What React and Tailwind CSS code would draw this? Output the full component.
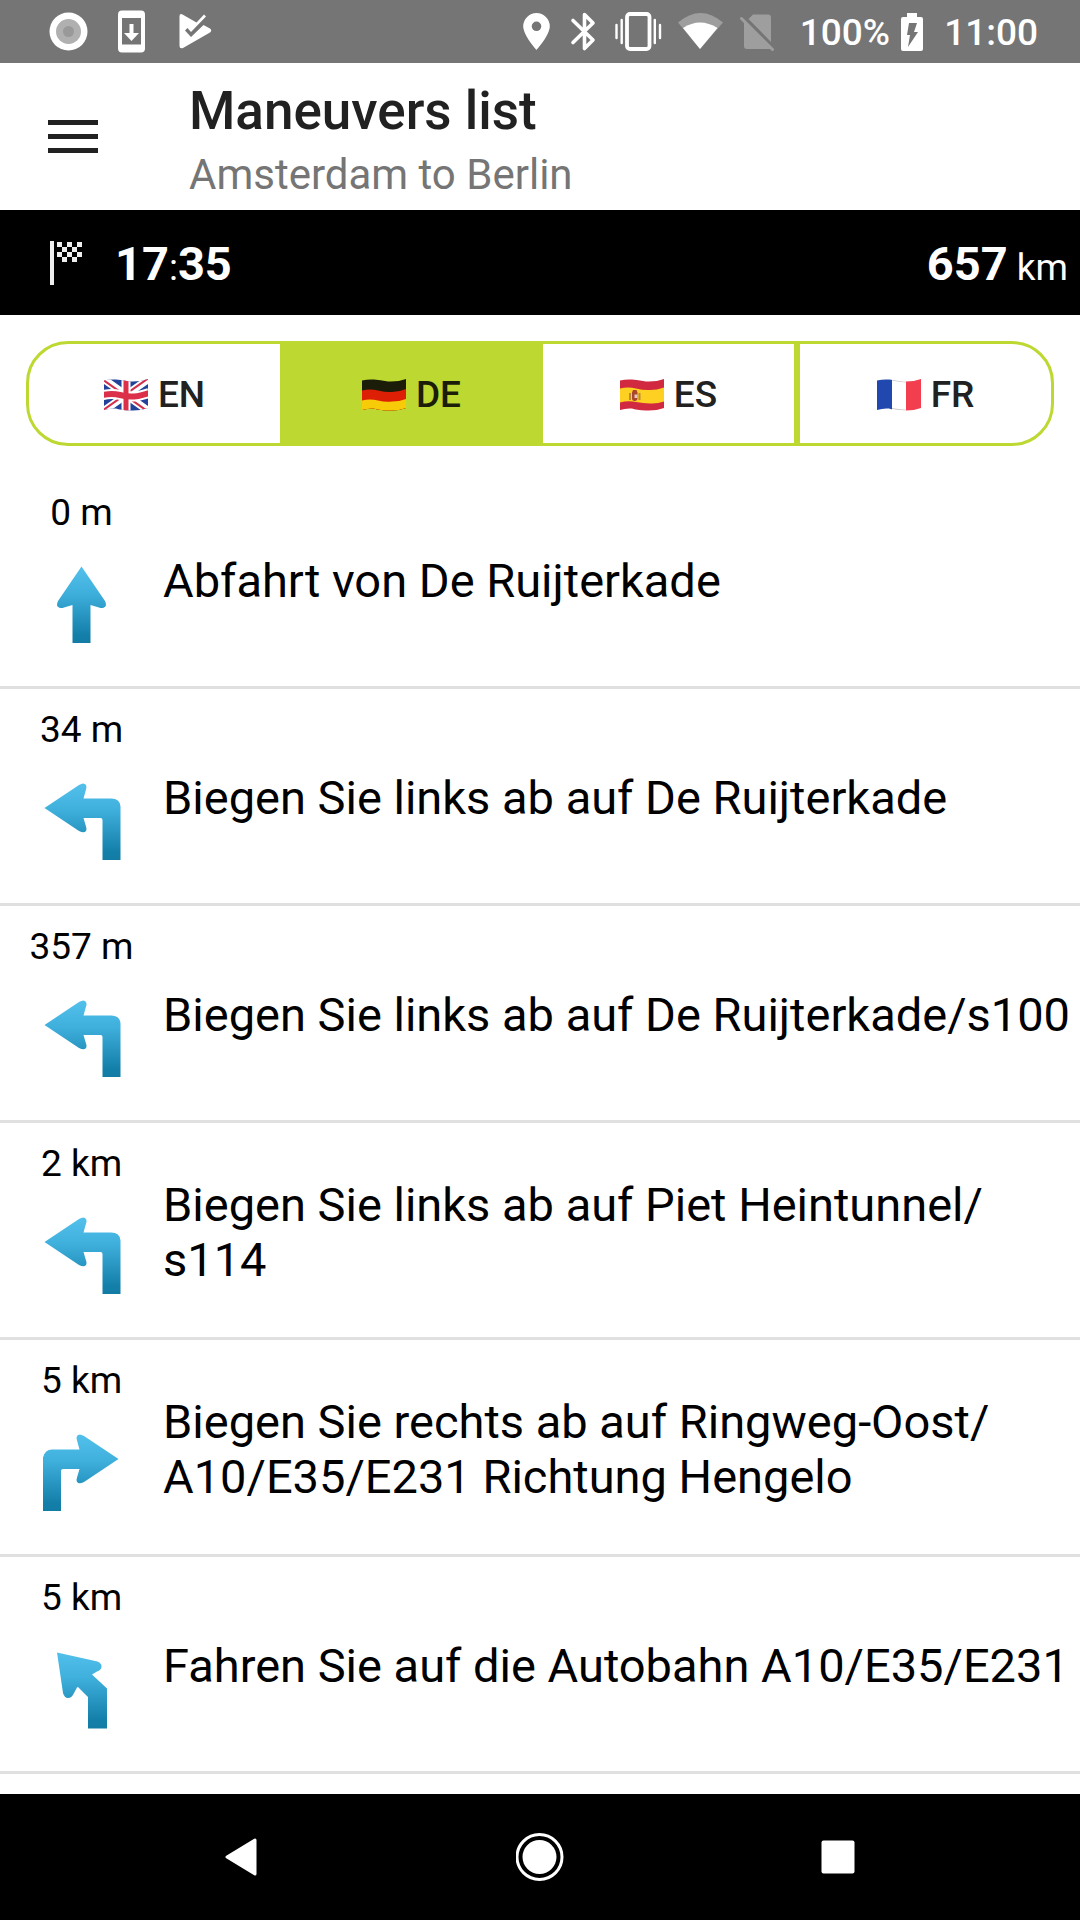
import React from "react";

const StatusLeft = () => (
  <svg width="212" height="63" viewBox="0 0 212 63" aria-hidden="true">
    <circle cx="68.500" cy="31.500" r="19" fill="#fff" />
    <circle cx="68.500" cy="31.500" r="12.500" fill="#b0b0b0" />
    <circle cx="68.500" cy="31.500" r="5.500" fill="#999" />
    <path fill="#fff" fillRule="evenodd" d="M122 10.500h19a4 4 0 0 1 4 4v34a4 4 0 0 1-4 4h-19a4 4 0 0 1-4-4v-34a4 4 0 0 1 4-4zM122 18v26.500h19V18z" />
    <path fill="#fff" d="M129.500 24h4v9h5.500l-7.500 8-7.500-8h5.500z" />
    <path fill="#fff" d="M179.500 16.500q0-3.500 3-2l14 8 7.500-8 2 2-15 15.500-3.500-4-2.500 2.500 6 6.500 12.500-12 6.500 3.500q2.500 2 0 4L183 48q-3.500 1-3.500-2z" />
  </svg>
);

const StatusIcons = () => (
  <svg width="254" height="63" viewBox="524 0 254 63" aria-hidden="true">
    <path fill="#fff" fillRule="evenodd" d="M538.500 13a13.300 13.300 0 0 1 13.300 13.300c0 9-13.300 23.700-13.300 23.700s-13.300-14.700-13.300-23.700A13.300 13.300 0 0 1 538.500 13zm0 8.500a4.800 4.800 0 1 0 0 9.600 4.800 4.800 0 0 0 0-9.600z" />
    <path fill="none" stroke="#fff" strokeWidth="3.600" strokeLinejoin="round" strokeLinecap="round" d="M575 20.500l20 19.500-8.500 8.500v-34l8.500 8.500-20 19.500" />
    <g fill="none" stroke="#fff">
      <rect x="629" y="14" width="22.500" height="35" rx="3" strokeWidth="3.800" />
      <path strokeWidth="2.400" strokeLinecap="round" d="M618.500 25v13M623.700 20v23M656.800 20v23M662 25v13" />
    </g>
    <path fill="#9e9e9e" d="M680 22.500q22.500-19 45 0L702 49z" />
    <path fill="#fff" d="M685 28q17-11 34.500 0L702 49z" />
    <path fill="#9e9e9e" d="M755 14.500h15q3 0 3 3V42l-22.500-23zM746 22l27 27h-24q-3 0-3-3z" />
    <path stroke="#9e9e9e" strokeWidth="3" strokeLinecap="round" d="M743.500 18.500l31 31" />
  </svg>
);

const Battery = () => (
  <svg width="24" height="40" viewBox="0 0 24 40" aria-hidden="true">
    <path fill="#fff" d="M7 1h10v4h4q2 0 2 2v30q0 2-2 2H3q-2 0-2-2V7q0-2 2-2h4z" />
    <path fill="#757575" d="M9 11h8l-3 9h4L8 35l2-12H7z" />
  </svg>
);

const FinishFlag = () => (
  <svg width="36" height="46" viewBox="0 0 36 46" aria-hidden="true">
    <rect x="1" y="1" width="4" height="44" fill="#eee" />
    <path fill="#eee" d="M8 2h5v5H8zM18 2h5v5h-5zM28 2h5v5h-5zM13 7h5v5h-5zM23 7h5v5h-5zM8 12h5v5H8zM18 12h5v5h-5zM28 12h5v5h-5zM13 17h5v5h-5zM23 17h5v5h-5z" />
  </svg>
);

const WAVE = "M0 1.500Q6 0 12 .500T26 2.500Q36 3 44 0V29Q36 32 26 31.500T12 29.500Q6 29 0 31z";

function Flag({ code }) {
  const id = "wave-" + code;
  return (
    <svg width="44" height="32" viewBox="0 0 44 32" aria-hidden="true">
      <defs>
        <clipPath id={id}><path d={WAVE} /></clipPath>
      </defs>
      <g clipPath={`url(#${id})`}>
        {code === "EN" && (
          <>
            <rect width="44" height="32" fill="#23439b" />
            <path d="M-2-1L46 33M46-1L-2 33" stroke="#fff" strokeWidth="7.500" />
            <path d="M-2 0L46 34M46-2L-2 32" stroke="#d3304b" strokeWidth="2" />
            <path d="M22 0V32" stroke="#fff" strokeWidth="9" />
            <path d="M-1 16Q8 14 16 16T30 17.500T45 14" stroke="#fff" strokeWidth="10" fill="none" />
            <path d="M22 0V32" stroke="#dc2f4a" strokeWidth="5" />
            <path d="M-1 16Q8 14 16 16T30 17.500T45 14" stroke="#dc2f4a" strokeWidth="6" fill="none" />
          </>
        )}
        {code === "DE" && (
          <>
            <rect width="44" height="32" fill="#1b1d08" />
            <path fill="#dc1f05" d="M0 11.500Q8 9.500 16 11.500T30 13Q37 13 44 10V32H0z" />
            <path fill="#f8cb08" d="M0 21.500Q8 19.500 16 21.500T30 22.500Q37 22.500 44 20V32H0z" />
          </>
        )}
        {code === "ES" && (
          <>
            <rect width="44" height="32" fill="#d12a40" />
            <path fill="#fdd022" d="M0 9.500Q8 7.500 16 9.500T30 11Q37 11 44 8.500V22.500Q37 25 30 24.500T16 23Q8 21.500 0 23.500z" />
            <path fill="#c08a3a" d="M9 14h2v7H9zM18.500 14h2v7h-2z" />
            <path fill="#a8472c" d="M12 13.500l1-2.500h3.500l1 2.500V19q0 3-2.800 3T12 19z" />
            <path fill="#e6c9c4" d="M14.500 15.500h3V19h-3z" />
          </>
        )}
        {code === "FR" && (
          <>
            <rect width="44" height="32" fill="#fff" />
            <rect width="15" height="32" fill="#2148ae" />
            <rect x="29" width="15" height="32" fill="#f33e50" />
            <path d="M15 1Q22 2.500 29 3M15 29.500Q22 30.800 29 31.200" stroke="#ccc" strokeWidth="1" fill="none" />
          </>
        )}
      </g>
    </svg>
  );
}

const ARROWS = {
  straight: "M40.500 6.500L64 41q2.500 5-1 6.500-2 1-5 0L49.500 45v38h-18V45l-8.500 2.500q-3 1-5 0-3.500-1.500-1-6.500z",
  left: "M3.500 31L38 8q5-3 7 0 1 2 0 4.500L42.500 21.500H70q9 0 9.500 8v53.500h-18v-40q0-2-2-2h-17l2.500 8.500q1 2.500 0 4.500-2 2.500-7 0z",
  right: "M77.500 31L43 8q-5-3-7 0-1 2 0 4.500l2.500 9H11q-7 0-9 8v53.500h18v-40q0-2 2-2h16.500l-2.500 8.500q-1 2.500 0 4.500 2 2.500 7 0z",
  slight: "M16 7.500l40.500 9q4.500 2 4 5.500-.5 3-4.500 4.500L51 29.500 66 43.500v40H47V52L37 42l-1 .5-3 5.500q-2 5-6 5-3.500 0-5-5z",
};

function Arrow({ kind, id }) {
  return (
    <svg width="82" height="88" viewBox="0 0 82 88" aria-hidden="true">
      <defs>
        <linearGradient id={id} gradientUnits="userSpaceOnUse" x1="0" y1="6" x2="0" y2="83">
          <stop offset="0" stopColor="#53c1ec" />
          <stop offset="0.35" stopColor="#3fafdc" />
          <stop offset="0.9" stopColor="#137fa9" />
          <stop offset="1" stopColor="#137ca5" />
        </linearGradient>
      </defs>
      <path d={ARROWS[kind]} fill={`url(#${id})`} />
    </svg>
  );
}

const maneuvers = [
  { distance: "0 m", kind: "straight", text: "Abfahrt von De Ruijterkade" },
  { distance: "34 m", kind: "left", text: "Biegen Sie links ab auf De Ruijterkade" },
  { distance: "357 m", kind: "left", text: "Biegen Sie links ab auf De Ruijterkade/s100" },
  { distance: "2 km", kind: "left", text: "Biegen Sie links ab auf Piet Heintunnel/\u200bs114" },
  { distance: "5 km", kind: "right", text: "Biegen Sie rechts ab auf Ringweg-Oost/\u200bA10/E35/E231 Richtung Hengelo" },
  { distance: "5 km", kind: "slight", text: "Fahren Sie auf die Autobahn A10/E35/E231" },
];

export default function App() {
  const [language, setLanguage] = React.useState("DE");
  return (
    <div className="flex min-h-screen flex-col bg-white font-[Roboto,sans-serif] text-black">
      <div className="flex h-[63px] items-center justify-between bg-[#757575] pr-[42px] text-[37px] font-medium text-white">
        <StatusLeft />
        <div className="flex items-center">
          <StatusIcons />
          <span className="ml-6 pt-[2px]">100%</span>
          <span className="ml-[10px]"><Battery /></span>
          <span className="ml-5 pt-[2px]">11:00</span>
        </div>
      </div>

      <header className="flex h-[147px] items-center">
        <button type="button" aria-label="Menu" className="ml-[48px] flex w-[50px] flex-col gap-[9px]">
          <span className="h-[5px] w-full bg-[#212121]" />
          <span className="h-[5px] w-full bg-[#212121]" />
          <span className="h-[5px] w-full bg-[#212121]" />
        </button>
        <div className="ml-[91px] pt-3">
          <h1 className="text-[53px] leading-[64px] font-medium text-[#212121]">Maneuvers list</h1>
          <p className="text-[42px] leading-[64px] text-[#757575]">Amsterdam to Berlin</p>
        </div>
      </header>

      <div className="flex h-[105px] items-center bg-black pr-3 pl-[49px] text-white">
        <FinishFlag />
        <p className="ml-[30px] pt-1 text-[47px] font-bold">
          17<span className="text-[37px] font-normal">:</span>35
        </p>
        <p className="ml-auto pt-1 text-[47px] font-bold">
          657<span className="text-[37px] font-normal"> km</span>
        </p>
      </div>

      <div className="m-[26px] grid grid-cols-4">
        {["EN", "DE", "ES", "FR"].map((code) => (
          <button
            key={code}
            type="button"
            aria-pressed={language === code}
            onClick={() => setLanguage(code)}
            className="flex h-[105px] items-center justify-center gap-[10px] border-[3px] border-[#bcd831] bg-white pt-[3px] text-[37px] font-medium text-[#212121] first:rounded-l-[42px] last:rounded-r-[42px] aria-pressed:bg-[#bcd831] aria-pressed:text-[#1b1d08]"
          >
            <Flag code={code} />
            {code}
          </button>
        ))}
      </div>

      <ul className="flex-1">
        {maneuvers.map((m, i) => (
          <li key={i} className="flex h-[217px] items-center border-b-[3px] border-[#e0e0e0]">
            <div className="flex w-[163px] shrink-0 flex-col items-center gap-[25px] self-stretch pt-[19px]">
              <span className="text-[37px] leading-[44px]">{m.distance}</span>
              <Arrow kind={m.kind} id={"shade-" + i} />
            </div>
            <p className="pt-[3px] text-[47px] leading-[55px]">{m.text}</p>
          </li>
        ))}
      </ul>

      <nav className="grid h-[126px] grid-cols-[1fr_280px_280px_1fr] items-center bg-black">
        <button type="button" aria-label="Back" className="col-start-1 justify-self-end">
          <svg width="36" height="40" viewBox="0 0 36 40" aria-hidden="true">
            <path d="M3 20L31 3v34z" fill="#fff" stroke="#fff" strokeWidth="3" strokeLinejoin="round" />
          </svg>
        </button>
        <button type="button" aria-label="Home" className="col-span-2 justify-self-center">
          <svg width="48" height="48" viewBox="0 0 48 48" aria-hidden="true">
            <circle cx="23.500" cy="24" r="22.500" fill="none" stroke="#fff" strokeWidth="3" />
            <circle cx="23.500" cy="24" r="17" fill="#fff" />
          </svg>
        </button>
        <button type="button" aria-label="Recent apps" className="justify-self-start">
          <svg width="36" height="34" viewBox="0 0 36 34" aria-hidden="true">
            <rect x="1.500" y="0.500" width="33" height="33" rx="2" fill="#fff" />
          </svg>
        </button>
      </nav>
    </div>
  );
}
